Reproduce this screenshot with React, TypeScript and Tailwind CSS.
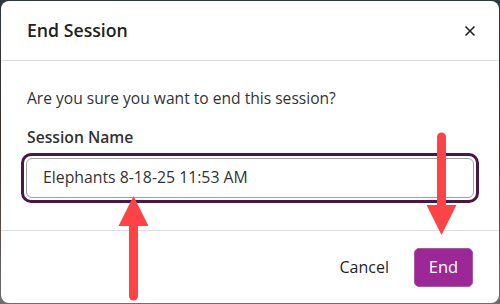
import React from "react";

const Arrow = ({ x, fromY, toY }: { x: number; fromY: number; toY: number }) => {
  const up = toY < fromY;
  const head = up ? toY + 30 : toY - 30;
  return (
    <g>
      <line x1={x} y1={fromY} x2={x} y2={head} stroke="#fc4446" strokeWidth={9} strokeLinecap="round" />
      <polygon points={`${x},${toY} ${x - 15},${head} ${x + 15},${head}`} fill="#fc4446" />
    </g>
  );
};

export default function App() {
  return (
    <div
      className="relative w-[500px] h-[304px] p-px bg-gradient-to-b from-[#2e3640] via-[#3a3028] to-[#6e6e6e]"
      style={{ fontFamily: '"Open Sans", "Noto Sans", sans-serif' }}
    >
      <div className="flex flex-col h-[302px] bg-white rounded-[8px] overflow-hidden">
        <div className="flex items-center justify-between h-[60px] px-[26px] border-b border-[#dedede]">
          <h2 className="text-[17.7px] font-semibold text-[#222]">End Session</h2>
          <button className="text-[#222] -mr-[4px]">
            <svg width="14" height="14" viewBox="0 0 14 14">
              <path d="M2.5 2.5 L11.5 11.5 M11.5 2.5 L2.5 11.5" stroke="#222" strokeWidth="1.6" />
            </svg>
          </button>
        </div>

        <div className="flex flex-col px-[20px] pt-[26px] pb-[27px] border-b border-[#dedede]">
          <p className="pl-[6px] text-[15.6px] leading-[22px] text-[#333]">Are you sure you want to end this session?</p>
          <label className="pl-[6px] mt-[18px] text-[15.7px] leading-[20px] font-semibold text-[#333]">Session Name</label>
          <div className="mt-[6px] p-[2px] border-[3px] border-[#4b1548] rounded-[10px]">
            <div className="flex items-center h-[40px] px-[16px] border border-[#a0a0a0] rounded-[6px] text-[15.8px] text-[#333]">
              Elephants 8-18-25 11:53 AM
            </div>
          </div>
        </div>

        <div className="flex flex-1 items-center justify-end px-[26px]">
          <button className="mr-[25px] text-[16px] text-[#1f1f1f]">Cancel</button>
          <button className="w-[59px] h-[39px] rounded-[5px] bg-[#9b2896] border border-[#a55aa2] text-[16.5px] text-white">
            End
          </button>
        </div>
      </div>

      <svg className="absolute inset-0 pointer-events-none" width="500" height="304">
        <Arrow x={133.5} fromY={296} toY={196} />
        <Arrow x={441.5} fromY={137} toY={235} />
      </svg>
    </div>
  );
}
